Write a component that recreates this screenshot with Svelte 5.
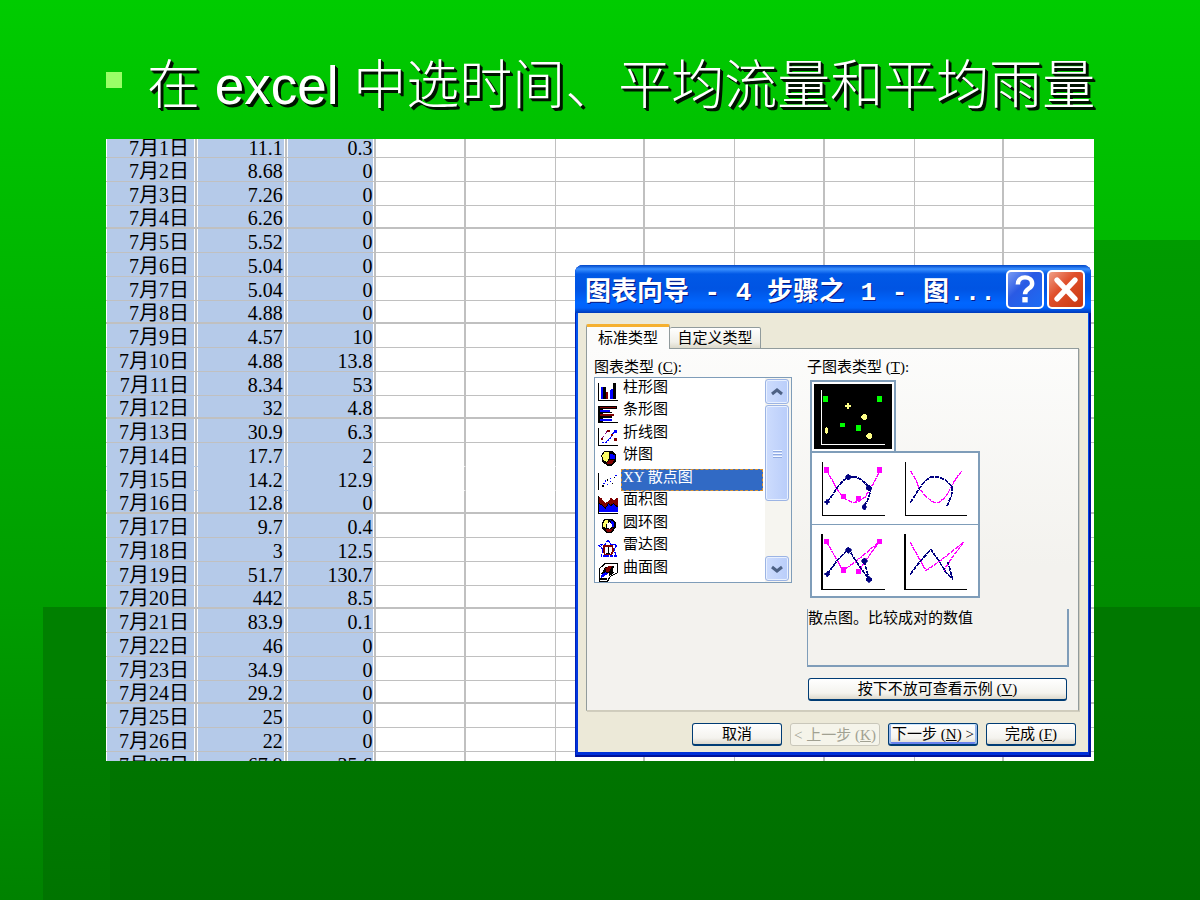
<script>
  // date, average flow, average rainfall
  const rows = [
    ['7月1日', '11.1', '0.3'],
    ['7月2日', '8.68', '0'],
    ['7月3日', '7.26', '0'],
    ['7月4日', '6.26', '0'],
    ['7月5日', '5.52', '0'],
    ['7月6日', '5.04', '0'],
    ['7月7日', '5.04', '0'],
    ['7月8日', '4.88', '0'],
    ['7月9日', '4.57', '10'],
    ['7月10日', '4.88', '13.8'],
    ['7月11日', '8.34', '53'],
    ['7月12日', '32', '4.8'],
    ['7月13日', '30.9', '6.3'],
    ['7月14日', '17.7', '2'],
    ['7月15日', '14.2', '12.9'],
    ['7月16日', '12.8', '0'],
    ['7月17日', '9.7', '0.4'],
    ['7月18日', '3', '12.5'],
    ['7月19日', '51.7', '130.7'],
    ['7月20日', '442', '8.5'],
    ['7月21日', '83.9', '0.1'],
    ['7月22日', '46', '0'],
    ['7月23日', '34.9', '0'],
    ['7月24日', '29.2', '0'],
    ['7月25日', '25', '0'],
    ['7月26日', '22', '0'],
    ['7月27日', '67.9', '35.6'],
  ]
  const emptyCols = [1, 2, 3, 4, 5, 6, 7, 8]

  const types = ['柱形图', '条形图', '折线图', '饼图', 'XY 散点图', '面积图', '圆环图', '雷达图', '曲面图']
  let selected = $state('XY 散点图')
  let tab = $state(0)
</script>

{#snippet typeIcon(i)}
  {#if i === 0}
    <svg viewBox="38 36 63 60">
      <path d="M40 38v53h59" fill="none" stroke="#000" stroke-width="3" />
      <path d="M48 50h8v38h-8zM78 56h6v32h-6z" fill="#00f" />
      <path d="M54 50h7v38h-7zM82 38h10v50h-10z" fill="#000" />
      <path d="M62 66h6v22h-6z" fill="#800000" />
      <path d="M74 60h5v28h-5z" fill="#00f" />
    </svg>
  {:else if i === 1}
    <svg viewBox="38 102 63 60">
      <path d="M38 107h58v10H52v38h47v4H38z" fill="#000" />
      <path d="M43 110h50v5H43zM43 132h42v6H43z" fill="#800000" />
      <path d="M43 119h30v6H43zM43 146h38v7H43z" fill="#00f" />
      <path d="M43 126h36v4H43zM43 139h38v4H43z" fill="#000" />
    </svg>
  {:else if i === 2}
    <svg viewBox="38 171 63 60">
      <path d="M40 173v53h59" fill="none" stroke="#000" stroke-width="3" />
      <path d="M48 206l8-8 8-13 8-3" fill="none" stroke="#800080" stroke-width="3" stroke-dasharray="5 3" />
      <path d="M50 217h12l10-8 8-14 6-8" fill="none" stroke="#00f" stroke-width="4" stroke-dasharray="6 3" />
      <path d="M66 179h8v8h-8zM86 204h9v9h-9zM76 192h8v7h-8zM46 204h7v7h-7z" fill="#800000" />
      <path d="M87 180h9v9h-9z" fill="#00f" />
    </svg>
  {:else if i === 3}
    <svg viewBox="38 237 63 60">
      <path d="M56 243h26l11 12v18l-12 14H66l-16-12-2-20z" fill="#000" />
      <path d="M57 247h13v20l-6 9-11-6-2-14z" fill="#ff6" />
      <path d="M74 250l14 6v10H74z" fill="#00f" />
      <path d="M64 279l10-9h14l-10 13h-8z" fill="#800000" />
    </svg>
  {:else if i === 4}
    <svg viewBox="38 306 63 60">
      <path d="M40 309v51" stroke="#000" stroke-width="3" />
      <path d="M51 346h4v4h-4zM65 327h3v5h-3zM79 340h3v3h-3zM86 322h4v3h-4z" fill="#000" />
      <path d="M52 339h6v3h-6zM59 331h3v4h-3zM64 342h5v3h-5zM73 332h4v3h-4zM90 315h5v4h-5zM74 324h4v3h-4z" fill="#00f" />
    </svg>
  {:else if i === 5}
    <svg viewBox="38 372 63 60">
      <path d="M40 378v51h59" fill="none" stroke="#000" stroke-width="3" />
      <path d="M42 382l6 2 12 16 10-8 8-10 8 10 9-8 4 4v38H42z" fill="#800000" />
      <path d="M42 402l8 4 10 10 10-14 6 6 8-6 14 10v14H42z" fill="#00f" />
      <path d="M42 401l10 5 8 9 10-15 6 7 8-6 14 10" fill="none" stroke="#000" stroke-width="3" />
    </svg>
  {:else if i === 6}
    <svg viewBox="38 441 63 60">
      <path d="M59 446h20l12 12v16l-12 15H62l-13-13v-18z" fill="#000" />
      <path d="M60 449h8v8l-7 9v8l-8-4v-10z" fill="#ff6" />
      <path d="M75 450l12 8v12h-8v-8z" fill="#00f" />
      <path d="M62 478h14l8-6-6 13H64z" fill="#800000" />
      <path d="M66 460l6-4 7 6v10l-6 5-7-4z" fill="#fff" />
    </svg>
  {:else if i === 7}
    <svg viewBox="38 507 63 60">
      <path d="M68 511l8 12 18 2-7 14 5 19H48l5-20-12-12 18-3z" fill="#fff" stroke="#00f" stroke-width="4" stroke-dasharray="9 2" />
      <path d="M56 528h24l4 12-6 13H58l-2-10z" fill="none" stroke="#800000" stroke-width="5" />
      <path d="M68 530v18M62 549h12" stroke="#000" stroke-width="3" />
    </svg>
  {:else}
    <svg viewBox="38 573 63 60">
      <path d="M41 594l18-16h36v28l-20 10-8 14H41z" fill="#fff" stroke="#000" stroke-width="3" />
      <path d="M48 608l10-18 16-6h14l-8 18-16 4-8 10z" fill="#000" />
      <path d="M60 592l10-6h10l-8 16-10 2z" fill="#800000" />
      <path d="M46 612l14-8 8 4-12 8-10 6z" fill="#00f" />
      <path d="M74 602l10 2-10 8zM44 624h20" fill="#800000" stroke="#000" stroke-width="4" />
    </svg>
  {/if}
{/snippet}

<div class="slide">
  <div class="shade right"></div>
  <div class="shade low"></div>

  <h1><span class="bullet"></span><span>在 excel 中选时间、平均流量和平均雨量</span></h1>

  <div class="capture">
    <div class="sheet">
      <table>
        <tbody>
          {#each rows as row}
            <tr>
              {#each row as cell}
                <td class="picked">{cell}</td>
              {/each}
              {#each emptyCols as c}
                <td></td>
              {/each}
            </tr>
          {/each}
        </tbody>
      </table>
    </div>

    <div class="dialog" role="dialog" aria-labelledby="wizard-title">
      <header>
        <h2 id="wizard-title">图表向导 - 4 步骤之 1 - 图...</h2>
        <button class="cap help" aria-label="帮助">
          <svg viewBox="0 0 38 38"><path d="M11 14c0-11 16-10 16-1 0 6-8 5-8 12" fill="none" stroke="#fff" stroke-width="5" /><path d="M16 28h6v6h-6z" fill="#fff" /></svg>
        </button>
        <button class="cap close" aria-label="关闭">
          <svg viewBox="0 0 38 38"><path d="M9 9l20 21M29 9L9 30" stroke="#fff" stroke-width="6" stroke-linecap="round" /></svg>
        </button>
      </header>

      <div class="body">
        <div class="tabs">
          <button class="tab" class:active={tab === 0} onclick={() => (tab = 0)}>标准类型</button>
          <button class="tab" class:active={tab === 1} onclick={() => (tab = 1)}>自定义类型</button>
        </div>

        <div class="panel">
          <div>
            <p class="label" id="type-label">图表类型 (<u>C</u>):</p>
            <div class="listbox">
              <ul aria-labelledby="type-label">
                {#each types as type, i}
                  <li>
                    {@render typeIcon(i)}
                    <button class:selected={selected === type} onclick={() => (selected = type)}>{type}</button>
                  </li>
                {/each}
              </ul>
              <div class="scrollbar">
                <button class="arrow" aria-label="向上"><svg viewBox="0 0 12 12"><path d="M1 8l5-4 5 4" /></svg></button>
                <div class="thumb"><i></i><i></i><i></i></div>
                <button class="arrow down" aria-label="向下"><svg viewBox="0 0 12 12"><path d="M1 4l5 4 5-4" /></svg></button>
              </div>
            </div>
          </div>

          <div class="side">
            <p class="label">子图表类型 (<u>T</u>):</p>
            <div class="subtypes">
              <button class="first" aria-label="散点图">
                <svg viewBox="42 39 234 195" preserveAspectRatio="none">
                  <path d="M42 39h234v195H42z" fill="#000" />
                  <path d="M64 57v163h190" fill="none" stroke="#fff" stroke-width="3" />
                  <path d="M69 75h15v18H69zM231 75h15v18h-15zM120 156h15v12h-15zM168 162h15v18h-15z" fill="#0f0" />
                  <path d="M141 96h6v5h6v7h-6v5h-6v-5h-6v-7h6zM189 129h6l6 6v6l-6 6h-6l-6-6v-6zM204 186h6l6 6v6l-6 6h-6l-6-6v-6zM78 168h3l3 8v6l-3 8h-3l-3-8v-6z" fill="#ff8" />
                </svg>
              </button>
              <div class="cells">
                <button aria-label="平滑线散点图">
                  <svg viewBox="33 246 252 213">
                    <path d="M64 273v160h190" class="axis" />
                    <path d="M78 298l20 36 10 20 14 18 18 16 18 7 14-2 22-14 12-20 14-22 20-40" class="pink" />
                    <path d="M79 393l10-12 18-28 20-24 16-11h24l16 8 24 22 4 12-10 30-9 16" class="navy" />
                    <path d="M69 288h15v17H69zM231 288h15v17h-15zM120 369h15v15h-15zM168 376h15v15h-15z" class="pdot" />
                    <path d="M143 309l8 6v6l-8 6-8-6v-6zM206 342l9 7v4l-9 8-9-8v-4zM192 399l6 6v6l-6 8-6-8v-6zM79 384l4 7 6 2-6 3-4 6-4-6-6-3 6-2z" class="ndot" />
                  </svg>
                </button>
                <button aria-label="无数据点平滑线散点图">
                  <svg viewBox="285 246 252 213">
                    <path d="M316 273v160h188" class="axis" />
                    <path d="M333 300l14 24 12 28 14 18 18 17 12 7h16l18-14 12-20 10-20 20-30 10-12" class="pink" />
                    <path d="M331 395l10-14 16-26 18-24 18-13h26l18 8 22 22-2 24-14 34" class="navy" />
                  </svg>
                </button>
                <button aria-label="折线散点图">
                  <svg viewBox="33 462 252 213">
                    <path d="M64 489v168h190" class="axis thick" />
                    <path d="M77 511l50 88 40-28 71-60-48 66-14 24" class="pink" />
                    <path d="M80 610l28-40 36-36 20 32 26 38 17 22-16-56" class="navy" />
                    <path d="M69 503h15v16H69zM231 503h15v16h-15zM120 589h15v17h-15zM168 593h15v16h-15z" class="pdot" />
                    <path d="M143 528l9 6v6l-9 7-8-7v-6zM192 561l8 6v6l-8 7-8-7v-6zM206 617l8 6v6l-8 7-8-7v-6zM80 600l3 7 6 3-6 3-3 7-4-7-6-3 6-3z" class="ndot" />
                  </svg>
                </button>
                <button aria-label="无数据点折线散点图">
                  <svg viewBox="285 462 252 213">
                    <path d="M316 489v168h188" class="axis thick" />
                    <path d="M331 513l20 36 28 50 44-30 70-56-40 54-20 32" class="pink" />
                    <path d="M331 611l32-42 31-34 24 34 22 36 20 21-14-52" class="navy" />
                  </svg>
                </button>
              </div>
            </div>
            <p class="desc">散点图。比较成对的数值</p>
            <button class="btn sample">按下不放可查看示例 (<u>V</u>)</button>
          </div>
        </div>

        <footer>
          <button class="btn">取消</button>
          <button class="btn" disabled>&lt; 上一步 (<u>K</u>)</button>
          <button class="btn default">下一步 (<u>N</u>) &gt;</button>
          <button class="btn">完成 (<u>F</u>)</button>
        </footer>
      </div>
    </div>
  </div>
</div>

<style>
  :global(body) {
    background: #007800;
  }

  .slide {
    position: relative;
    min-height: 100vh;
    box-sizing: border-box;
    padding: 50px 106px 100px;
    background: linear-gradient(#00cc00 0%, #00c200 14%, #009c00 68%, #008200 100%);
    overflow: hidden;
    font-family: "Liberation Serif", "Noto Sans CJK SC", serif;
  }

  .shade {
    position: absolute;
    right: 0;
    bottom: 0;
  }

  .right {
    left: 110px;
    top: 240px;
    background: linear-gradient(#009b00, #008c00 55%, #007000);
  }

  .low {
    left: 43px;
    top: 607px;
    background: linear-gradient(90deg, #008000 67px, #007800 67px);
  }

  .low::after {
    content: "";
    position: absolute;
    inset: 0;
    background: linear-gradient(transparent 30%, rgba(0, 80, 0, 0.25));
  }

  h1 {
    position: relative;
    display: flex;
    gap: 25px;
    margin: 0;
    height: 89px;
    line-height: 72px;
    font-family: "Liberation Sans", "Noto Sans CJK SC", sans-serif;
    font-size: 53px;
    font-weight: 300;
    white-space: nowrap;
    color: #fff;
    text-shadow: 1px 1px 0 #001400, 2px 2px 0 #001400, 3px 3px 0 #001400;
  }

  .bullet {
    flex: none;
    width: 16px;
    height: 16px;
    margin-top: 22px;
    background: #99ff66;
  }

  .capture {
    position: relative;
  }

  .sheet {
    height: 622px;
    overflow: hidden;
    background: #fff;
  }

  table {
    width: 100%;
    table-layout: fixed;
    border-collapse: separate;
    border-spacing: 0;
    font-size: 20px;
    line-height: 18px;
  }

  td {
    box-sizing: border-box;
    height: 24px;
    padding: 2px 2px 0 0;
    border-right: 1px solid #c0c0c0;
    border-bottom: 1px solid #c0c0c0;
    text-align: right;
    white-space: nowrap;
  }

  tr:nth-child(4n) td {
    height: 23px;
    border-bottom-width: 2px;
  }

  tr:first-child td {
    height: 19px;
    padding-top: 0;
  }

  tr:nth-child(14) td,
  tr:nth-child(15) td {
    border-bottom-color: transparent;
  }

  td:nth-child(even) {
    border-right-width: 2px;
  }

  td:first-child {
    width: 91px;
    padding-right: 6px;
  }

  td:last-child {
    border-right: 0;
  }

  td.picked {
    border-right-width: 2px;
    background: #b5cae9;
    box-shadow: inset 1px 0 #fff, inset -1px 0 #fff;
  }

  .dialog {
    position: absolute;
    left: 469px;
    right: 3px;
    top: 126px;
    box-sizing: border-box;
    padding: 0 3px 5px;
    border-radius: 8px 8px 0 0;
    background: linear-gradient(#0058ee, #0040e8 60%, #0030d8);
    box-shadow: inset 1px 0 #0020b8, inset -2px -2px #00129a;
    font-size: 15px;
    color: #000;
  }

  header {
    display: flex;
    align-items: center;
    gap: 3px;
    height: 48px;
    margin: 0 -3px;
    padding: 0 6px 0 10px;
    box-sizing: border-box;
    border-radius: 8px 8px 0 0;
    background: linear-gradient(#0046c8 0, #3a90ff 4px, #0058e6 9px, #0054e3 24px, #0066ff 38px, #0062fa 43px, #0038b8 48px);
  }

  h2 {
    flex: 1;
    min-width: 0;
    margin: 0;
    overflow: hidden;
    white-space: pre;
    line-height: 40px;
    font: 700 26px "Liberation Mono", "Noto Sans CJK SC", monospace;
    color: #fff;
    text-shadow: 1px 1px 0 #0a1883;
  }

  button {
    padding: 0;
    font: inherit;
    color: inherit;
  }

  .cap {
    flex: none;
    width: 38px;
    height: 39px;
    border: 2px solid #fff;
    border-radius: 5px;
    background: linear-gradient(135deg, #7a9cf4, #2a5ae4 40%, #1b6cf4);
  }

  .cap.close {
    background: linear-gradient(135deg, #f0a088, #e0502c 40%, #c83810);
  }

  .cap svg {
    display: block;
    width: 100%;
  }

  .body {
    padding: 11px 9px 6px 8px;
    background: #ece9d8;
  }

  .tabs {
    position: relative;
    display: flex;
    align-items: flex-end;
    height: 25px;
    margin-bottom: -1px;
  }

  .tab {
    box-sizing: border-box;
    width: 91px;
    height: 22px;
    border: 1px solid #919b9c;
    border-left: 0;
    border-radius: 2px 2px 0 0;
    background: linear-gradient(#fff, #f0efe8 70%, #dcd9ca);
    line-height: 18px;
    white-space: nowrap;
  }

  .tab.active {
    width: 84px;
    height: 25px;
    border-left: 1px solid #919b9c;
    border-top: 3px solid #f5b030;
    border-bottom: 0;
    background: #fcfcfb;
  }

  .panel {
    display: grid;
    grid-template-columns: 198px 1fr;
    gap: 15px;
    padding: 8px 9px 9px 7px;
    border: 1px solid #919b9c;
    border-bottom-color: #cfccbc;
    background: linear-gradient(#fcfcfb, #f3f2ee 60%);
    box-shadow: 1px 1px #d0cdbe;
  }

  p {
    margin: 0;
  }

  .label {
    line-height: 20px;
    white-space: nowrap;
  }

  .listbox {
    display: flex;
    border: 1px solid #7f9db9;
    background: #fff;
  }

  ul {
    flex: 1;
    margin: 0;
    padding: 1px 0 1px 3px;
    list-style: none;
  }

  li {
    display: flex;
    gap: 2px;
    height: 22px;
  }

  li:nth-child(even) {
    height: 23px;
  }

  li svg {
    flex: none;
    width: 21px;
    height: 20px;
    margin-top: 3px;
    shape-rendering: crispEdges;
  }

  li button {
    flex: 1;
    height: 22px;
    padding: 0 2px 6px;
    border: 0;
    background: none;
    text-align: left;
    line-height: 16px;
    margin-right: 2px;
  }

  li button.selected {
    background: #316ac5;
    color: #fff;
    outline: 1px dashed #d89030;
    outline-offset: -1px;
  }

  .scrollbar {
    display: flex;
    flex-direction: column;
    gap: 1px;
    width: 24px;
    padding: 1px 2px 1px 0;
    background: #f6f5f0;
  }

  .arrow,
  .thumb {
    box-sizing: border-box;
    width: 24px;
    border: 1px solid #9cb4e4;
    border-radius: 3px;
    background: linear-gradient(90deg, #cddcfd, #b9cdfa);
    box-shadow: inset 0 0 0 1px #e8f0ff;
  }

  .arrow {
    height: 25px;
  }

  .arrow svg {
    display: block;
    width: 12px;
    margin: 0 auto;
    fill: none;
    stroke: #4d6185;
    stroke-width: 3;
  }

  .down {
    margin-top: auto;
  }

  .thumb {
    display: flex;
    flex-direction: column;
    justify-content: center;
    align-items: center;
    gap: 2px;
    height: 96px;
  }

  .thumb i {
    width: 9px;
    height: 1px;
    background: #f4f8ff;
    box-shadow: 0 1px #8fa9e0;
  }

  .side {
    display: flex;
    flex-direction: column;
  }

  .subtypes {
    margin: 3px 0 11px 3px;
  }

  .subtypes button {
    display: block;
    border: 0;
    background: #fff;
  }

  .subtypes svg {
    display: block;
    width: 83px;
    height: 71px;
    shape-rendering: crispEdges;
  }

  .subtypes .first {
    padding: 2px;
    border: 2px solid #7f9db9;
    border-bottom: 0;
  }

  .subtypes .first svg {
    width: 78px;
    height: 65px;
  }

  .cells {
    display: grid;
    grid-template-columns: 83px 83px;
    row-gap: 1px;
    width: max-content;
    border: 2px solid #7f9db9;
    background: #7f9db9;
  }

  .axis {
    fill: none;
    stroke: #000;
    stroke-width: 3;
  }

  .thick {
    stroke-width: 5;
  }

  .pink,
  .navy {
    fill: none;
    stroke: #f0f;
    stroke-width: 4;
    stroke-dasharray: 14 2;
  }

  .navy {
    stroke: #000080;
    stroke-width: 5;
  }

  .pdot {
    fill: #f0f;
  }

  .ndot {
    fill: #000080;
    stroke: #000080;
    stroke-width: 2;
  }

  .desc {
    box-sizing: border-box;
    height: 58px;
    margin-bottom: 11px;
    border: solid #7f9db9;
    border-width: 0 2px 2px 1px;
    line-height: 18px;
  }

  .btn {
    box-sizing: border-box;
    width: 90px;
    height: 23px;
    border: 1px solid #003c74;
    border-bottom-width: 2px;
    border-radius: 3px;
    background: linear-gradient(#fff, #f4f3ee 70%, #dcd8cc);
    line-height: 18px;
    white-space: nowrap;
  }

  .sample {
    width: auto;
    margin: 0 2px 0 1px;
  }

  .default {
    box-shadow: inset 0 1px #cee7ff, inset 2px 0 #98b8ea, inset -2px 0 #98b8ea, inset 0 -2px #6982ee;
  }

  .btn:disabled {
    border: 1px solid #c9c7ba;
    background: #f5f4ea;
    color: #a1a192;
  }

  footer {
    display: flex;
    justify-content: flex-end;
    gap: 8px;
    padding: 12px 3px 0 0;
  }
</style>
